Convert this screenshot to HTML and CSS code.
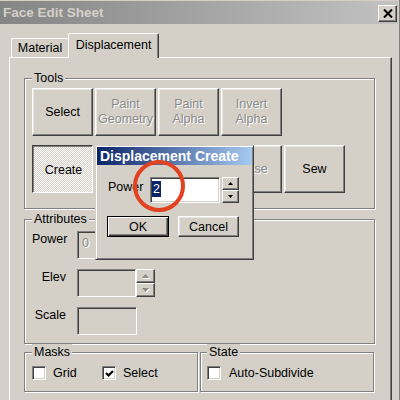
FILE: index.html
```html
<!DOCTYPE html>
<html lang="en">
<head>
    <meta charset="UTF-8">
    <meta name="viewport" content="width=device-width, initial-scale=1.0">
    <title>Face Edit Sheet</title>
    <link rel="stylesheet" href="styles.css">
</head>
<body>

<div class="window">
    <div class="titlebar">
        <span class="title">Face Edit Sheet</span>
        <button class="close-btn">
            <svg width="10" height="9" viewBox="0 0 10 9"><path d="M1 0.5 L9 8.5 M9 0.5 L1 8.5" stroke="#000" stroke-width="2"/></svg>
        </button>
    </div>

    <div class="sheet">
        <div class="tabs">
            <div class="tab">Material</div>
            <div class="tab active">Displacement</div>
        </div>

        <div class="panel">
            <fieldset class="group tools">
                <legend>Tools</legend>
                <div class="tool-row">
                    <button class="btn tool">Select</button>
                    <button class="btn tool" disabled>Paint<br>Geometry</button>
                    <button class="btn tool" disabled>Paint<br>Alpha</button>
                    <button class="btn tool" disabled>Invert<br>Alpha</button>
                </div>
                <div class="tool-row">
                    <button class="btn tool pressed">Create</button>
                    <button class="btn tool"></button>
                    <button class="btn tool"></button>
                    <button class="btn tool" disabled>Erase</button>
                    <button class="btn tool">Sew</button>
                </div>
            </fieldset>

            <fieldset class="group attributes">
                <legend>Attributes</legend>
                <div class="attr-grid">
                    <label class="attr-label left">Power</label>
                    <div class="field"><span class="dim">0</span></div>

                    <label class="attr-label">Elev</label>
                    <div class="spin-field">
                        <div class="field narrow"></div>
                        <div class="spinner tall">
                            <span class="spin-btn dim-arrow"><svg width="7" height="4"><path d="M3.5 0 L7 4 H0Z"/></svg></span>
                            <span class="spin-btn dim-arrow"><svg width="7" height="4"><path d="M0 0 H7 L3.5 4Z"/></svg></span>
                        </div>
                    </div>

                    <label class="attr-label">Scale</label>
                    <div class="field"></div>
                </div>
            </fieldset>

            <div class="group-row">
                <fieldset class="group masks">
                    <legend>Masks</legend>
                    <div class="checks">
                        <label class="check grid-check"><span class="box"></span>Grid</label>
                        <label class="check"><span class="box"><svg width="9" height="9" viewBox="0 0 9 9"><path d="M1 4 L3.5 6.5 L8 2" fill="none" stroke="#000" stroke-width="2.2"/></svg></span>Select</label>
                    </div>
                </fieldset>
                <fieldset class="group state">
                    <legend>State</legend>
                    <div class="checks">
                        <label class="check"><span class="box"></span>Auto-Subdivide</label>
                    </div>
                </fieldset>
            </div>
        </div>
    </div>

    <!-- small modal window over the sheet -->
    <div class="dialog">
        <div class="dialog-title">Displacement Create</div>
        <div class="dialog-body">
            <div class="dialog-row">
                <label class="dialog-label">Power</label>
                <div class="text-input"><span class="selected">2</span></div>
                <div class="spinner small">
                    <span class="spin-btn"><svg width="5" height="3"><path d="M2.5 0 L5 3 H0Z"/></svg></span>
                    <span class="spin-btn"><svg width="5" height="3"><path d="M0 0 H5 L2.5 3Z"/></svg></span>
                </div>
            </div>
            <div class="dialog-buttons">
                <button class="btn default">OK</button>
                <button class="btn cancel">Cancel</button>
            </div>
        </div>
    </div>

    <div class="highlight-ring"></div>
</div>

</body>
</html>
```

FILE: styles.css
```css
body {
    margin: 0;
    font-family: "Liberation Sans", Arial, sans-serif;
    font-size: 12.5px;
    color: #000;
    background: #d4d0c8;
}

.window {
    width: 400px;
    height: 400px;
    overflow: hidden;
    position: relative;
    background: #d4d0c8;
    box-shadow: inset -1px 0 #808080;
}

/* inactive caption */
.titlebar {
    height: 23px;
    margin: 1px 2px 0 0;
    padding: 0 1px 0 3px;
    display: flex;
    align-items: center;
    justify-content: space-between;
    background: linear-gradient(90deg, #858585, #c2c2c2);
}

.title {
    font-weight: bold;
    font-size: 13.5px;
    color: #d4d0c8;
}

.close-btn {
    width: 19px;
    height: 17px;
    padding: 0;
    margin-top: 2px;
    display: flex;
    align-items: center;
    justify-content: center;
    background: #d4d0c8;
    border: 1px solid;
    border-color: #fff #404040 #404040 #fff;
    box-shadow: inset -1px -1px #808080;
}

.sheet {
    padding: 9px 0 0 9px;
}

/* tabs */
.tabs {
    display: flex;
    align-items: flex-end;
    padding-left: 2px;
}

.tab {
    box-sizing: border-box;
    width: 57px;
    height: 19px;
    line-height: 18px;
    text-align: center;
    border-top: 1px solid #fff;
    border-left: 1px solid #fff;
    border-radius: 2px 2px 0 0;
}

.tab.active {
    position: relative;
    z-index: 1;
    width: 91px;
    height: 25px;
    line-height: 23px;
    margin-bottom: -1px;
    background: #d4d0c8;
    border-right: 1px solid #404040;
    box-shadow: inset -1px 0 #808080;
}

.panel {
    box-sizing: border-box;
    width: 383px;
    height: 360px;
    padding: 12px 16px 0 14px;
    border-top: 1px solid #fff;
    border-left: 1px solid #fff;
    border-right: 1px solid #404040;
    box-shadow: inset -1px 0 #808080;
}

/* etched group boxes */
.group {
    margin: 0;
    min-width: 0;
    padding: 2px 7px 15px;
    border: 1px solid #808080;
    box-shadow: inset 1px 1px #fff, 1px 1px #fff;
}

.group legend {
    padding: 0 2px;
    line-height: 16px;
    background: #d4d0c8;
}

.attributes {
    margin-top: 2px;
    padding: 4px 7px 8px;
}

.group-row {
    display: flex;
    gap: 2px;
}

.group-row .group {
    box-sizing: border-box;
    flex: 0 0 174px;
    width: 174px;
    padding: 6px 7px 11px;
}

.group-row .state {
    padding-left: 6px;
}

/* buttons */
.btn {
    box-sizing: border-box;
    padding: 0;
    font: inherit;
    color: #000;
    background: #d4d0c8;
    border: 1px solid;
    border-color: #fff #404040 #404040 #fff;
    box-shadow: inset -1px -1px #808080, inset 1px 1px #e8e6e2;
}

.btn:disabled {
    color: #8a8a8a;
    text-shadow: 1px 1px #fff;
}

.tool-row {
    display: flex;
    gap: 2px;
}

.tool-row + .tool-row {
    margin-top: 9px;
}

.tool {
    width: 61px;
    height: 48px;
    line-height: 15px;
}

.tool.pressed {
    border-color: #404040 #fff #fff #404040;
    box-shadow: inset 1px 1px #808080;
    background: repeating-conic-gradient(#fff 0 25%, #d4d0c8 0 50%) 0 0 / 2px 2px;
    padding: 2px 0 0 2px;
}

/* attribute fields */
.attr-grid {
    display: grid;
    grid-template-columns: 34px auto;
    grid-auto-rows: 28px;
    column-gap: 11px;
    row-gap: 10px;
}

.attr-label {
    text-align: right;
    line-height: 16px;
}

.attr-label.left {
    text-align: left;
}

.field {
    box-sizing: border-box;
    width: 60px;
    height: 28px;
    padding: 4px 0 0 4px;
    background: #d4d0c8;
    border: 1px solid;
    border-color: #808080 #fff #fff #808080;
    box-shadow: inset 1px 1px #404040;
}

.field.narrow {
    width: 59px;
}

.dim {
    color: #8a8a8a;
    text-shadow: 1px 1px #fff;
}

.spin-field {
    display: flex;
}

.spinner {
    display: flex;
    flex-direction: column;
}

.spinner.tall {
    width: 19px;
    height: 28px;
}

.spin-btn {
    flex: 1;
    display: flex;
    align-items: center;
    justify-content: center;
    background: #d4d0c8;
    border: 1px solid;
    border-color: #fff #404040 #404040 #fff;
    box-shadow: inset -1px -1px #808080;
}

.dim-arrow svg {
    fill: #8a8a8a;
    filter: drop-shadow(1px 1px 0 #fff);
}

/* check boxes */
.checks {
    display: flex;
    align-items: center;
}

.check {
    display: flex;
    align-items: center;
    gap: 7px;
    line-height: 14px;
}

.grid-check {
    width: 70px;
}

.state .check {
    gap: 8px;
}

.box {
    box-sizing: border-box;
    width: 14px;
    height: 14px;
    display: flex;
    align-items: center;
    justify-content: center;
    background: #fff;
    border: 1px solid;
    border-color: #808080 #fff #fff #808080;
    box-shadow: inset 1px 1px #404040, inset -1px -1px #d4d0c8;
}

/* dialog */
.dialog {
    position: absolute;
    left: 95px;
    top: 145px;
    box-sizing: border-box;
    width: 159px;
    height: 115px;
    padding: 1px;
    background: #d4d0c8;
    border: 1px solid;
    border-color: #d4d0c8 #404040 #404040 #d4d0c8;
    box-shadow: inset 1px 1px #fff, inset -1px -1px #808080;
}

.dialog-title {
    height: 18px;
    line-height: 18px;
    padding-left: 3px;
    font-weight: bold;
    font-size: 14px;
    color: #fff;
    white-space: nowrap;
    overflow: hidden;
    background: linear-gradient(90deg, #0a246a, #a6caf0);
}

.dialog-body {
    padding: 12px 0 0 10px;
}

.dialog-row {
    display: flex;
    height: 26px;
}

.dialog-label {
    width: 42px;
    padding: 3px 0 0 1px;
}

.text-input {
    box-sizing: border-box;
    width: 70px;
    height: 26px;
    padding: 3px 0 0 1px;
    background: #fff;
    border: 1px solid;
    border-color: #808080 #fff #fff #808080;
    box-shadow: inset 1px 1px #404040, inset -1px -1px #d4d0c8;
}

.selected {
    display: inline-block;
    padding: 0 1px;
    line-height: 16px;
    color: #fff;
    background: #0a246a;
}

.spinner.small {
    width: 17px;
    margin-left: 2px;
}

.dialog-buttons {
    display: flex;
    gap: 9px;
    margin-top: 13px;
}

.dialog-buttons .btn {
    height: 21px;
    width: 61px;
}

.btn.default {
    width: 62px;
    border: 1px solid #000;
    box-shadow: inset 1px 1px #fff, inset -1px -1px #404040, inset -2px -2px #808080;
}

/* red marker ring drawn over the dialog */
.highlight-ring {
    position: absolute;
    left: 133px;
    top: 160px;
    width: 52px;
    height: 52px;
    box-sizing: border-box;
    border: 4px solid #e2421f;
    border-radius: 50%;
}
```
